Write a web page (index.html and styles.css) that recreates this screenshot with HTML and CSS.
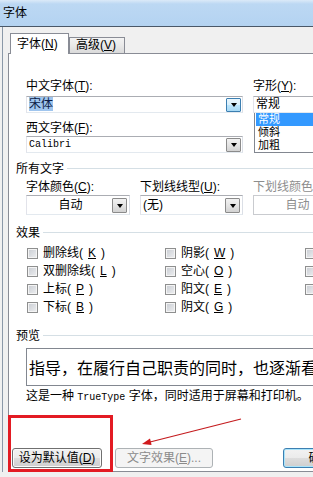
FILE: index.html
```html
<html>
  <head>
    <meta charset="UTF-8">
    <link rel="stylesheet" href="styles.css">
  </head>
  <body>

    <div class="titlebar">字体</div>

    <div class="dialog">
      <div class="tabs">
        <div class="tab active">字体(<u>N</u>)</div>
        <div class="tab">高级(<u>V</u>)</div>
      </div>

      <div class="panel">
        <div class="content">

          <div class="font-row">
            <div class="field">
              <div class="label">中文字体(<u>T</u>):</div>
              <div class="combo first">
                <span class="value"><span class="picked">宋体</span></span>
                <span class="drop hover"></span>
              </div>
              <div class="label second">西文字体(<u>F</u>):</div>
              <div class="combo first tight">
                <span class="value mono">Calibri</span>
                <span class="drop"></span>
              </div>
            </div>
            <div class="field">
              <div class="label">字形(<u>Y</u>):</div>
              <div class="combo first">
                <span class="value">常规</span>
              </div>
              <div class="listbox">
                <div class="item selected">常规</div>
                <div class="item">倾斜</div>
                <div class="item">加粗</div>
              </div>
            </div>
          </div>

          <div class="group-title">所有文字</div>
          <div class="color-row">
            <div class="field">
              <div class="label">字体颜色(<u>C</u>):</div>
              <div class="combo wide">
                <span class="value center">自动</span>
                <span class="drop"></span>
              </div>
            </div>
            <div class="field">
              <div class="label">下划线线型(<u>U</u>):</div>
              <div class="combo wide">
                <span class="value">(无)</span>
                <span class="drop"></span>
              </div>
            </div>
            <div class="field">
              <div class="label disabled">下划线颜色(<u>I</u>):</div>
              <div class="combo wide off">
                <span class="value center">自动</span>
                <span class="drop"></span>
              </div>
            </div>
          </div>

          <div class="group-title effects">效果</div>
          <div class="checks">
            <label class="check"><span class="box"></span>删除线(<u>K</u>)</label>
            <label class="check"><span class="box"></span>阴影(<u>W</u>)</label>
            <label class="check"><span class="box"></span>小型大写字母(<u>M</u>)</label>
            <label class="check"><span class="box"></span>双删除线(<u>L</u>)</label>
            <label class="check"><span class="box"></span>空心(<u>O</u>)</label>
            <label class="check"><span class="box"></span>全部大写字母(<u>A</u>)</label>
            <label class="check"><span class="box"></span>上标(<u>P</u>)</label>
            <label class="check"><span class="box"></span>阳文(<u>E</u>)</label>
            <label class="check"><span class="box"></span>隐藏(<u>H</u>)</label>
            <label class="check"><span class="box"></span>下标(<u>B</u>)</label>
            <label class="check"><span class="box"></span>阴文(<u>G</u>)</label>
          </div>

          <div class="group-title preview-title">预览</div>
          <div class="preview">指导，在履行自己职责的同时，也逐渐看到了自己的不足</div>
          <div class="caption">这是一种 <span class="mono">TrueType</span> 字体，同时适用于屏幕和打印机。</div>
        </div>

        <div class="buttons">
          <button class="btn">设为默认值(<u>D</u>)</button>
          <button class="btn off">文字效果(<u>E</u>)...</button>
          <button class="btn default">确定</button>
        </div>
      </div>
    </div>

    <div class="mark"></div>
    <svg class="arrow" width="313" height="477" viewBox="0 0 313 477">
      <line x1="241" y1="419" x2="150" y2="442" stroke="#c41a1d" stroke-width="1.2" />
      <polygon points="142,444 150,438.6 151.6,445" fill="#d01a1d" />
    </svg>

  </body>
</html>
```

FILE: styles.css
```css
body {
  margin: 0;
  width: 313px;
  height: 477px;
  overflow: hidden;
  position: relative;
  background: #f0f0f0;
  font-family: "Liberation Sans", "Noto Sans CJK SC", sans-serif;
  font-size: 12px;
  line-height: 14px;
  color: #000;
}

u {
  text-decoration: underline;
}

.mono {
  font-family: "Liberation Mono", "Noto Sans CJK SC", monospace;
  font-size: 10px;
}

.titlebar {
  height: 26px;
  border-bottom: 1px solid #4a5868;
  background: linear-gradient(#dbeaf8 0, #bcd8f3 4px, #b4d3f1 100%);
  padding-left: 3px;
  display: flex;
  align-items: center;
}

.dialog {
  width: 420px;
  margin-left: 2px;
  border-left: 1px solid #8a98a8;
  padding: 6px 0 0 5px;
}

/* tabs */
.tabs {
  display: flex;
  align-items: flex-end;
  height: 20px;
  margin-left: 2px;
}

.tab {
  box-sizing: border-box;
  width: 56px;
  height: 16px;
  padding-left: 6px;
  border: 1px solid #898c95;
  border-bottom: none;
  background: linear-gradient(#f3f3f3, #e9e9e9 50%, #dadada);
  line-height: 15px;
}

.tab.active {
  width: 59px;
  height: 21px;
  margin-bottom: -1px;
  position: relative;
  z-index: 1;
  background: #fff;
  line-height: 20px;
}

.panel {
  background: #fff;
  border-left: 1px solid #898c95;
  border-top: 1px solid #898c95;
  border-bottom: 1px solid #898c95;
  padding-bottom: 3px;
}

.content {
  padding: 25px 0 0 17px;
}

/* fields */
.label {
  height: 14px;
  white-space: nowrap;
}

.label.second {
  margin-top: 8px;
}

.label.disabled {
  color: #8d8d8d;
}

.font-row {
  display: grid;
  grid-template-columns: 217px 100px;
  column-gap: 10px;
}

.combo {
  box-sizing: border-box;
  display: flex;
  align-items: center;
  height: 17px;
  margin-top: 3px;
  border: 1px solid #abadb3;
  border-color: #abadb3 #dbdfe6 #e3e9ef #e2e3ea;
  background: #fff;
  white-space: nowrap;
}

.combo.tight {
  margin-top: 1px;
}

.combo.wide {
  height: 20px;
  margin-top: 1px;
}

.combo.off {
  border-color: #c9cbcf;
  color: #8d8d8d;
}

.value {
  flex: 1;
  padding-left: 2px;
  line-height: 15px;
}

.value.center {
  text-align: center;
}

.picked {
  background: #9fc5ee;
  color: #0c1c46;
}

.drop {
  box-sizing: border-box;
  width: 15px;
  height: 14px;
  margin-right: 1px;
  border: 1px solid #8b8b8b;
  border-radius: 1px;
  background: linear-gradient(#f2f2f2, #e4e4e4 50%, #d2d2d2);
  display: flex;
  align-items: center;
  justify-content: center;
}

.combo.wide .drop {
  height: 15px;
  margin-right: 2px;
}

.drop::after {
  content: "";
  border-left: 3.5px solid transparent;
  border-right: 3.5px solid transparent;
  border-top: 4px solid #000;
  margin-top: 1px;
}

.drop.hover {
  border-color: #3c7fb1;
  background: linear-gradient(#eaf6fd, #d9f0fc 50%, #bee6fd 50%, #a7d9f5);
}

.listbox {
  box-sizing: border-box;
  height: 40px;
  margin-left: 1px;
  padding: 0 1px;
  border: 1px solid #828790;
  border-top: none;
  font-size: 11px;
  line-height: 13px;
}

.item {
  height: 13px;
  padding-left: 2px;
}

.item.selected {
  background: #3399ff;
  color: #fff;
}

/* groups */
.group-title {
  display: flex;
  align-items: center;
  gap: 3px;
  margin: 9px 0 0 -10px;
  height: 14px;
  white-space: nowrap;
}

.group-title::after {
  content: "";
  flex: 1;
  height: 1px;
  margin-top: -2px;
  background: #d5dfe5;
}

.group-title.effects {
  margin-top: 11px;
}

.group-title.preview-title {
  margin-top: 13px;
}

.color-row {
  display: grid;
  grid-template-columns: 104px 103px 104px;
  column-gap: 10px;
  margin-top: 4px;
}

.checks {
  display: grid;
  grid-template-columns: 138px 140px 140px;
  grid-auto-rows: 18px;
  margin: 4px 0 0 1px;
}

.check {
  display: flex;
  align-items: center;
  gap: 5px;
  white-space: nowrap;
}

.box {
  box-sizing: border-box;
  width: 11px;
  height: 11px;
  border: 1px solid #8e8f8f;
  background: linear-gradient(135deg, #c8ccd2, #eeeff1);
  box-shadow: inset 0 0 0 1px #f4f4f4;
}

.preview {
  box-sizing: border-box;
  height: 38px;
  margin-top: 5px;
  padding-left: 2px;
  border: 1px solid #828790;
  border-right: none;
  font-family: "Noto Sans CJK SC", sans-serif;
  font-size: 16px;
  line-height: 36px;
  white-space: nowrap;
  overflow: hidden;
}

.caption {
  margin-top: 3px;
  height: 14px;
  white-space: nowrap;
}

/* buttons */
.buttons {
  display: flex;
  gap: 13px;
  margin-top: 45px;
  padding-left: 3px;
}

.btn {
  box-sizing: border-box;
  width: 90px;
  height: 20px;
  padding: 0;
  border: 1px solid #707070;
  border-radius: 3px;
  background: linear-gradient(#f2f2f2, #ebebeb 50%, #dddddd 50%, #cfcfcf);
  box-shadow: inset 0 0 0 1px #fbfbfb;
  font-family: "Liberation Sans", "Noto Sans CJK SC", sans-serif;
  font-size: 12px;
  line-height: 16px;
  color: #000;
}

.btn.off {
  width: 98px;
  border-color: #adb2b5;
  background: #f4f4f4;
  box-shadow: none;
  color: #8b8b8b;
}

.btn.default {
  width: 75px;
  margin-left: 57px;
  border-color: #3c7fb1;
  box-shadow: inset 0 0 0 1px #a9e4fb;
}

/* annotation over the screenshot */
.mark {
  position: absolute;
  left: 8px;
  top: 415px;
  width: 105px;
  height: 57px;
  box-sizing: border-box;
  border: 3px solid #e31b23;
}

.arrow {
  position: absolute;
  left: 0;
  top: 0;
  pointer-events: none;
}
```
